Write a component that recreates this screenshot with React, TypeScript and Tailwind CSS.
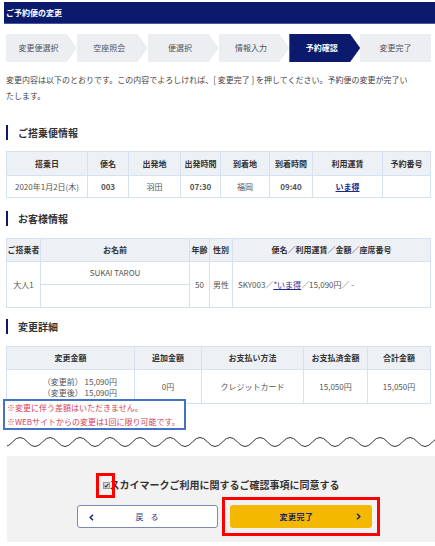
import React from "react";

// Step indicator
const steps = ["変更便選択", "空座照会", "便選択", "情報入力", "予約確認", "変更完了"];
const ACTIVE = 4;

const StepBar = () => (
  <div className="grid grid-cols-6 w-[425px] h-[28px]">
    {steps.map((s, i) => {
      const last = i === steps.length - 1;
      const active = i === ACTIVE;
      return (
        <div
          key={s}
          className={`flex items-center justify-center text-[8px] ${
            active ? "bg-[#0b1a6c] text-white font-bold" : "bg-[#eceef2] text-[#555]"
          } ${
            last
              ? ""
              : "pr-[6px] [clip-path:polygon(0_0,calc(100%_-_10px)_0,100%_50%,calc(100%_-_10px)_100%,0_100%)]"
          }`}
        >
          {s}
        </div>
      );
    })}
  </div>
);

// Section heading with left bar
const Heading = ({ children }: { children: React.ReactNode }) => (
  <div className="flex items-center h-[15px]">
    <div className="w-[2px] h-[15px] bg-[#0b1a6c]" />
    <div className="ml-[10px] text-[10px] font-bold text-[#333] leading-none">{children}</div>
  </div>
);

const th = "border border-[#d5e1ee] bg-[#edf1f6] font-bold text-[8px] text-[#333] text-center whitespace-nowrap p-0";
const td = "border border-[#d5e1ee] text-[8px] text-[#555] text-center whitespace-nowrap p-0";

// Wave divider
const wavePath = () => {
  let d = "M -24.5 6";
  d += " Q -17 -3 -9.5 6";
  for (let x = -9.5; x < 440; x += 15) d += ` T ${x + 15} 6`;
  return d;
};

const Checkbox = () => (
  <span className="relative inline-flex w-[7px] h-[7px]">
    <svg width="7" height="7" viewBox="0 0 7 7">
      <rect x="0.5" y="0.5" width="6" height="6" fill="#d6d6d6" stroke="#9a9a9a" />
      <path d="M1.6 3.6 L2.9 4.9 L5.4 2" fill="none" stroke="#333" strokeWidth="1.1" />
    </svg>
    <span className="absolute -left-[7px] -top-[9px] w-[19px] h-[25px] border-[3px] border-[#ff0000]" />
  </span>
);

export default function App() {
  return (
    <div
      className="w-[435px] h-[546px] bg-white pt-[2px] pl-[4px] overflow-hidden"
      style={{ fontFamily: '"Noto Sans CJK JP", "Noto Sans", sans-serif' }}
    >
      {/* Header */}
      <div className="h-[22px] bg-[#0b1a6c] border-b border-[#4657a0] flex items-center pl-[2px]">
        <span className="text-white font-bold text-[8px]">ご予約便の変更</span>
      </div>

      <div className="pl-[2px] pr-[5px]">
        <div className="mt-[10px]">
          <StepBar />
        </div>

        <p className="mt-[10px] text-[8px] leading-[16px] text-[#444]">
          変更内容は以下のとおりです。この内容でよろしければ、[ 変更完了 ] を押してください。予約便の変更が完了い
          <br />
          たします。
        </p>

        {/* 搭乗便情報 */}
        <div className="mt-[21px]">
          <Heading>ご搭乗便情報</Heading>
          <table className="mt-[11px] w-[424px] table-fixed border-collapse">
            <colgroup>
              <col className="w-[81px]" />
              <col className="w-[41px]" />
              <col className="w-[52px]" />
              <col className="w-[40px]" />
              <col className="w-[49px]" />
              <col className="w-[43px]" />
              <col className="w-[70px]" />
              <col className="w-[48px]" />
            </colgroup>
            <thead>
              <tr className="h-[24px]">
                <th className={th}>搭乗日</th>
                <th className={th}>便名</th>
                <th className={th}>出発地</th>
                <th className={th}>出発時間</th>
                <th className={th}>到着地</th>
                <th className={th}>到着時間</th>
                <th className={th}>利用運賃</th>
                <th className={th}>予約番号</th>
              </tr>
            </thead>
            <tbody>
              <tr className="h-[22px]">
                <td className={td}>2020年1月2日(木)</td>
                <td className={`${td} font-bold text-[#333]`}>003</td>
                <td className={td}>羽田</td>
                <td className={`${td} font-bold text-[#333]`}>07:30</td>
                <td className={td}>福岡</td>
                <td className={`${td} font-bold text-[#333]`}>09:40</td>
                <td className={td}>
                  <a className="font-bold text-[#1b2a8c] underline">いま得</a>
                </td>
                <td className={td}></td>
              </tr>
            </tbody>
          </table>
        </div>

        {/* お客様情報 */}
        <div className="mt-[13px]">
          <Heading>お客様情報</Heading>
          <table className="mt-[12px] w-[424px] table-fixed border-collapse">
            <colgroup>
              <col className="w-[34px]" />
              <col className="w-[149px]" />
              <col className="w-[20px]" />
              <col className="w-[23px]" />
              <col className="w-[198px]" />
            </colgroup>
            <thead>
              <tr className="h-[23px]">
                <th className={th}>ご搭乗者</th>
                <th className={th}>お名前</th>
                <th className={th}>年齢</th>
                <th className={th}>性別</th>
                <th className={th}>便名／利用運賃／金額／座席番号</th>
              </tr>
            </thead>
            <tbody>
              <tr className="h-[23px]">
                <td className={td} rowSpan={2}>大人1</td>
                <td className={td}>SUKAI TAROU</td>
                <td className={td} rowSpan={2}>50</td>
                <td className={td} rowSpan={2}>男性</td>
                <td className={`${td} text-left pl-[5px]`} rowSpan={2}>
                  SKY003／<a className="text-[#1b2a8c] underline">*いま得</a>／15,090円／ -
                </td>
              </tr>
              <tr className="h-[23px]">
                <td className={td}></td>
              </tr>
            </tbody>
          </table>
        </div>

        {/* 変更詳細 */}
        <div className="mt-[11px]">
          <Heading>変更詳細</Heading>
          <table className="mt-[12px] w-[424px] table-fixed border-collapse">
            <colgroup>
              <col className="w-[128px]" />
              <col className="w-[67px]" />
              <col className="w-[102px]" />
              <col className="w-[64px]" />
              <col className="w-[63px]" />
            </colgroup>
            <thead>
              <tr className="h-[23px]">
                <th className={th}>変更金額</th>
                <th className={th}>追加金額</th>
                <th className={th}>お支払い方法</th>
                <th className={th}>お支払済金額</th>
                <th className={th}>合計金額</th>
              </tr>
            </thead>
            <tbody>
              <tr className="h-[34px]">
                <td className={`${td} text-right pr-[17px] leading-[11px]`}>
                  （変更前） 15,090円
                  <br />
                  （変更後） 15,090円
                </td>
                <td className={td}>0円</td>
                <td className={td}>クレジットカード</td>
                <td className={td}>15,050円</td>
                <td className={td}>15,050円</td>
              </tr>
            </tbody>
          </table>
        </div>

        {/* Notes */}
        <div className="relative -mt-[5px] -ml-[3px] w-[183px] h-[31px] border-2 border-[#4472c4] bg-white px-[2px] text-[8px] leading-[14px] text-[#d6405a]">
          <div>※変更に伴う差額はいただきません。</div>
          <div>※WEBサイトからの変更は1回に限り可能です。</div>
        </div>
      </div>

      {/* Wave */}
      <svg className="block mt-[6px] ml-[3px]" width="428" height="12" viewBox="0 0 428 12">
        <path d={wavePath()} fill="none" stroke="#333" strokeWidth="1" />
      </svg>

      {/* Footer */}
      <div className="mt-[8px] ml-[3px] bg-[#f2f2f2] pt-[22px] pb-[6px]">
        <div className="flex items-center justify-center">
          <Checkbox />
          <span className="text-[10px] font-bold text-[#333] leading-[14px]">
            スカイマークご利用に関するご確認事項に同意する
          </span>
        </div>
        <div className="mt-[5px] flex items-center justify-center pl-[14px]">
          <button className="relative w-[141px] h-[23px] bg-white border border-[#7d88b5] rounded-[3px] flex items-center justify-center text-[8px] text-[#2a3780] tracking-[7px]">
            <svg className="absolute left-[11px] top-[8px]" width="5" height="7" viewBox="0 0 5 7">
              <path d="M4 0.8 L1.2 3.5 L4 6.2" fill="none" stroke="#1b2a6c" strokeWidth="1.5" />
            </svg>
            <span className="pl-[7px]">戻る</span>
          </button>
          <div className="ml-[4px] border-[3px] border-[#ff0000] px-[5px] py-[5px]">
            <button className="relative w-[142px] h-[23px] bg-[#f5b800] rounded-[3px] flex items-center justify-center text-[8px] font-bold text-[#1b2660] tracking-[0.5px]">
              <span className="-ml-[8px]">変更完了</span>
              <svg className="absolute right-[11px] top-[8px]" width="5" height="7" viewBox="0 0 5 7">
                <path d="M1 0.8 L3.8 3.5 L1 6.2" fill="none" stroke="#1b2660" strokeWidth="1.5" />
              </svg>
            </button>
          </div>
        </div>
      </div>
    </div>
  );
}
